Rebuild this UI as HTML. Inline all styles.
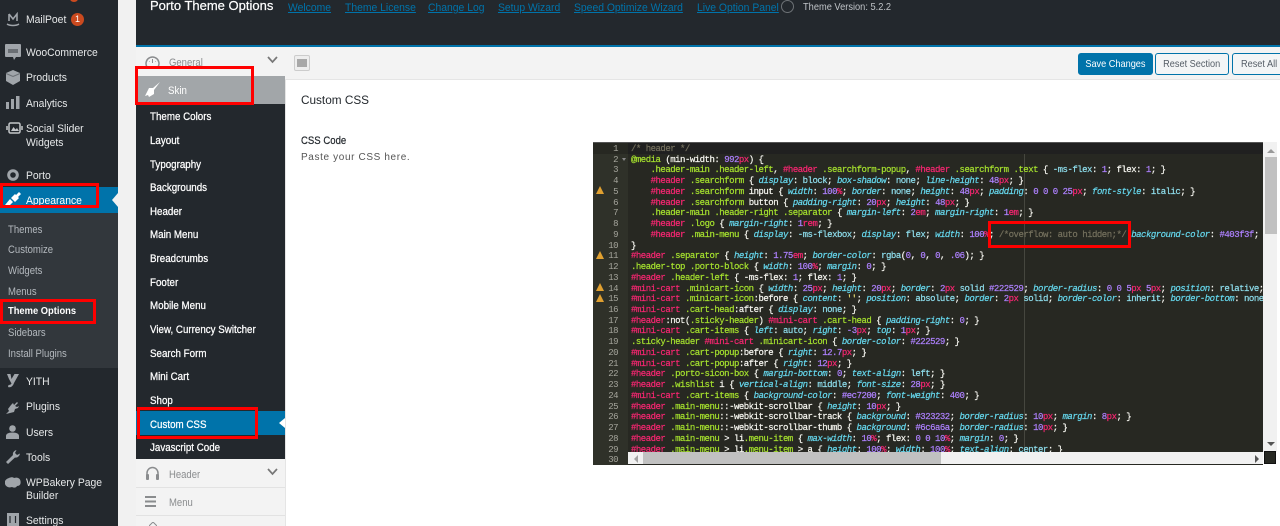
<!DOCTYPE html>
<html><head><meta charset="utf-8"><title>Porto Theme Options</title>
<style>
html,body{margin:0;padding:0;width:1280px;height:526px;overflow:hidden;background:#f1f1f1;font-family:"Liberation Sans",sans-serif}
body{filter:blur(.3px)}
.a,.s,.m,.h,.l,svg{position:absolute}
.a{display:block}
.s,.m,.h,.l,.x{transform-origin:0 50%}
.s{left:26px;margin-top:1px;font-size:11.4px;line-height:14px;color:#e6e8e9;white-space:nowrap;transform:scaleX(.91)}
.sub{left:8px;font-size:10.6px;color:#b4b9be;transform:scaleX(.9)}
.m{left:150px;margin-top:1px;font-size:10.8px;line-height:14px;color:#fff;white-space:nowrap;-webkit-text-stroke:.25px #fff;transform:scaleX(.905)}
.h{left:169px;margin-top:1px;font-size:10.8px;line-height:14px;color:#8a8c8e;white-space:nowrap;transform:scaleX(.88)}
.l{top:1px;font-size:11.4px;line-height:14px;color:#0073aa;text-decoration:underline;white-space:nowrap;transform:scaleX(.91)}
.r{position:absolute;border:3px solid #f00;box-sizing:border-box}
.btn{position:absolute;top:53px;height:22px;box-sizing:border-box;border:1px solid #0073aa;border-radius:3px;font-size:10.2px;line-height:21px;text-align:center;color:#555d66;background:#f3f5f6;white-space:nowrap;overflow:hidden}
.btn span{display:inline-block;transform:scaleX(.9)}
#code,#nums{font-family:"Liberation Mono",monospace;font-size:9px;line-height:10.74px;white-space:pre;letter-spacing:-.498px}
#code{position:absolute;left:631px;top:144px;width:632px;height:308px;overflow:hidden;color:#f8f8f2;-webkit-text-stroke:.2px}
#nums{position:absolute;left:593px;top:144px;width:25px;text-align:right;color:#a5a59c}
#code b{font-weight:normal;color:#f92672}#code u{text-decoration:none;color:#a6e22e}#code i{color:#66d9ef}#code s{text-decoration:none;color:#ae81ff}#code em{font-style:normal;color:#75715e}#code tt{font:inherit;color:#8fdfee}
</style></head><body>
<!-- admin sidebar -->
<div class="a" style="left:0;top:0;width:118px;height:526px;background:#23282d"></div>
<div class="a" style="left:0;top:187px;width:118px;height:26px;background:#0073aa"></div>
<div class="a" style="left:0;top:213px;width:118px;height:155px;background:#32373c"></div>
<div class="a" style="left:112px;top:193px;border:7px solid transparent;border-left:0;border-right:6px solid #f1f1f1"></div>
<div class="a" style="left:70px;top:-4px;width:8px;height:6px;border-radius:50%;background:#ca4a1f"></div>

<svg style="left:6px;top:12px" width="14" height="16" viewBox="0 0 14 16"><path d="M3 2v7M3 2l4 5 4-5v7" fill="none" stroke="#a0a5aa" stroke-width="1.6"/><path d="M1 12c3 2 9 2 12 0" fill="none" stroke="#a0a5aa" stroke-width="1.4"/></svg>
<div class="s" style="top:12px">MailPoet</div>
<div class="a" style="left:71px;top:13px;width:13px;height:13px;border-radius:50%;background:#ca4a1f;color:#fff;font-size:9px;line-height:13px;text-align:center">1</div>

<svg style="left:5px;top:44px" width="16" height="16" viewBox="0 0 16 16"><path d="M1 0h14a1 1 0 0 1 1 1v11a1 1 0 0 1-1 1h-4l-2 3-1-3H1a1 1 0 0 1-1-1V1a1 1 0 0 1 1-1z" fill="#a0a5aa"/><path d="M3 5h10v4H3z" fill="#6a6f74"/></svg>
<div class="s" style="top:45px">WooCommerce</div>
<svg style="left:5px;top:69px" width="16" height="16" viewBox="0 0 16 16"><path d="M8 1l7 3v8l-7 4-7-4V4z" fill="#a0a5aa"/><path d="M1 4.500l7 3 7-3" fill="none" stroke="#6a6f74"/></svg>
<div class="s" style="top:70px">Products</div>
<svg style="left:6px;top:96px" width="14" height="13" viewBox="0 0 14 13"><path d="M0 6h3v7H0zM5 3h3v10H5zM10 0h3.500v13H10z" fill="#a0a5aa"/></svg>
<div class="s" style="top:96px">Analytics</div>
<svg style="left:6px;top:122px" width="17" height="13" viewBox="0 0 17 13"><rect x="3" y="1" width="11" height="10" rx="1.500" fill="none" stroke="#c4c7ca" stroke-width="1.500"/><path d="M5 9l2.500-4 2 2.500 1.500-1.500 2 3z" fill="#c4c7ca"/><path d="M1 4v4M16 4v4" stroke="#c4c7ca" stroke-width="1.500"/></svg>
<div class="s" style="top:121px">Social Slider</div>
<div class="s" style="top:135px">Widgets</div>
<svg style="left:7px;top:169px" width="12" height="12" viewBox="0 0 12 12"><circle cx="6" cy="6" r="4.300" fill="none" stroke="#a0a5aa" stroke-width="3"/></svg>
<div class="s" style="top:168px">Porto</div>
<svg style="left:5px;top:192px" width="16" height="15" viewBox="0 0 16 15"><path d="M0 13l5-6 3 3-5 5zM6 6l4-4 1 1 3-3 2 2-3 3 1 1-4 4z" fill="#fff"/></svg>
<div class="s" style="top:193px;color:#fff">Appearance</div>
<div class="s sub" style="top:222px">Themes</div>
<div class="s sub" style="top:242px">Customize</div>
<div class="s sub" style="top:263px">Widgets</div>
<div class="s sub" style="top:284px">Menus</div>
<div class="s sub" style="top:304px;color:#fff;font-weight:bold;font-size:10.4px">Theme Options</div>
<div class="s sub" style="top:325px">Sidebars</div>
<div class="s sub" style="top:346px">Install Plugins</div>
<svg style="left:6px;top:373px" width="13" height="15" viewBox="0 0 13 15"><path d="M1 1h3.500l1 5 3-5H13L8 10c-1 3-3 5-6 4l.5-2c1.500 0 2.500-.5 3-1.500L3 6z" fill="#a0a5aa"/></svg>
<div class="s" style="top:374px">YITH</div>
<svg style="left:6px;top:400px" width="14" height="14" viewBox="0 0 14 14"><path d="M0 14l3-3-1-2 3-4 2-2 1 2 3-3 1 1-3 3 2 1 2-1-1 2-3 1-1 3-4 1z" fill="#a0a5aa"/></svg>
<div class="s" style="top:399px">Plugins</div>
<svg style="left:6px;top:425px" width="13" height="14" viewBox="0 0 13 14"><circle cx="6.500" cy="3.500" r="3.300" fill="#a0a5aa"/><path d="M0 14v-3c0-2 2-3.500 6.500-3.500S13 9 13 11v3z" fill="#a0a5aa"/></svg>
<div class="s" style="top:425px">Users</div>
<svg style="left:6px;top:450px" width="14" height="14" viewBox="0 0 14 14"><path d="M0 12l7-7c-.5-2 .5-4 3.500-5L9 3l2 2 3-1.500c-.5 3-3 4.500-5 4l-7 6.500z" fill="#a0a5aa"/></svg>
<div class="s" style="top:450px">Tools</div>
<svg style="left:5px;top:477px" width="16" height="12" viewBox="0 0 16 12"><path d="M4 1c2-1 4-1 5 0 3-1 6 0 6.500 3S15 9 12 9c-1 2-3 2-5 1-3 1-6 0-7-3S1 2 4 1z" fill="#a0a5aa"/></svg>
<div class="s" style="top:475px">WPBakery Page</div>
<div class="s" style="top:488px">Builder</div>
<svg style="left:7px;top:513px" width="12" height="13" viewBox="0 0 12 13"><rect width="12" height="13" fill="#a0a5aa"/><path d="M3 3v7M8.500 3v7" stroke="#23282d" stroke-width="1.200"/></svg>
<div class="s" style="top:513px">Settings</div>

<!-- top bar -->
<div class="a" style="left:136px;top:0;width:1144px;height:45px;background:#23282d"></div>
<div class="a" style="left:136px;top:45px;width:1144px;height:2px;background:#0073aa"></div>
<div class="a" style="left:150px;top:-2px;font-size:13px;line-height:16px;color:#fff;white-space:nowrap;-webkit-text-stroke:.2px #fff">Porto Theme Options</div>
<div class="l" style="left:288px">Welcome</div><div class="l" style="left:345px">Theme License</div><div class="l" style="left:428px">Change Log</div><div class="l" style="left:498px">Setup Wizard</div><div class="l" style="left:574px">Speed Optimize Wizard</div><div class="l" style="left:697px">Live Option Panel</div>
<div class="a" style="left:781px;top:0;width:11px;height:11px;border:1px solid #6d7276;border-radius:50%"></div>
<div class="a x" style="left:803px;top:1px;font-size:10.3px;line-height:14px;color:#c0c4c8;white-space:nowrap;transform:scaleX(.9)">Theme Version: 5.2.2</div>

<!-- main panel -->
<div class="a" style="left:136px;top:47px;width:1144px;height:479px;background:#fff"></div>
<div class="a" style="left:136px;top:47px;width:1144px;height:32px;background:#f3f3f3;border-bottom:1px solid #e5e5e5"></div>
<div class="a" style="left:136px;top:47px;width:149px;height:479px;background:#f3f3f3"></div>
<div class="a" style="left:285px;top:79px;width:1px;height:447px;background:#e5e5e5"></div>
<svg style="left:145px;top:55px" width="15" height="13" viewBox="0 0 15 13"><path d="M2 12a6.500 6.500 0 1 1 11 0" fill="none" stroke="#8a8c8e" stroke-width="1.500"/><path d="M7.500 8V4M4 6.500h.5M11 6.500h-.5" stroke="#8a8c8e"/></svg>
<div class="h" style="top:55px">General</div>
<svg style="left:267px;top:56px" width="11" height="8" viewBox="0 0 11 8"><path d="M1 1l4.500 5L10 1" fill="none" stroke="#777" stroke-width="1.700"/></svg>
<div class="a" style="left:294px;top:55px;width:16px;height:16px;box-sizing:border-box;border:1px solid #ccc;border-radius:2px;background:#eee"></div>
<div class="a" style="left:297px;top:59px;width:10px;height:8px;background:#a8a8a8"></div>
<!-- dark menu -->
<div class="a" style="left:136px;top:76px;width:149px;height:383px;background:#23282d"></div>
<div class="a" style="left:136px;top:76px;width:149px;height:28px;background:#a2a6a9"></div>
<svg style="left:145px;top:82px" width="15" height="15" viewBox="0 0 15 15"><path d="M15 0L8 6 4 6 0 14l3-1 1 2 5-3 0-4z" fill="#fff"/></svg>
<div class="a x" style="left:168px;top:84px;font-size:10.8px;line-height:14px;color:#fff;transform:scaleX(.9)">Skin</div>
<div class="a" style="left:136px;top:411px;width:149px;height:24px;background:#0073aa"></div>
<div class="a" style="left:279px;top:418px;border:5px solid transparent;border-left:0;border-right:6px solid #fff"></div>
<div class="m" style="top:109px">Theme Colors</div>
<div class="m" style="top:133px">Layout</div>
<div class="m" style="top:157px">Typography</div>
<div class="m" style="top:180px">Backgrounds</div>
<div class="m" style="top:204px">Header</div>
<div class="m" style="top:227px">Main Menu</div>
<div class="m" style="top:251px">Breadcrumbs</div>
<div class="m" style="top:275px">Footer</div>
<div class="m" style="top:298px">Mobile Menu</div>
<div class="m" style="top:322px">View, Currency Switcher</div>
<div class="m" style="top:346px">Search Form</div>
<div class="m" style="top:369px">Mini Cart</div>
<div class="m" style="top:393px">Shop</div>
<div class="m" style="top:417px">Custom CSS</div>
<div class="m" style="top:440px">Javascript Code</div>
<div class="a" style="left:136px;top:487px;width:149px;height:1px;background:#e2e2e2"></div>
<div class="a" style="left:136px;top:515px;width:149px;height:1px;background:#e2e2e2"></div>
<svg style="left:145px;top:466px" width="15" height="15" viewBox="0 0 15 15"><path d="M2 12V7a5.500 5.500 0 0 1 11 0v5" fill="none" stroke="#8a8c8e" stroke-width="1.500"/><rect x="1" y="8" width="3" height="6" rx="1" fill="#8a8c8e"/><rect x="11" y="8" width="3" height="6" rx="1" fill="#8a8c8e"/></svg>
<div class="h" style="top:467px">Header</div>
<svg style="left:267px;top:468px" width="11" height="8" viewBox="0 0 11 8"><path d="M1 1l4.500 5L10 1" fill="none" stroke="#777" stroke-width="1.700"/></svg>
<svg style="left:145px;top:496px" width="12" height="11" viewBox="0 0 12 11"><path d="M0 0h11v2H0zM0 4.500h11v2H0zM0 9h11v2H0z" fill="#8a8c8e"/></svg>
<div class="h" style="top:495px">Menu</div>
<svg style="left:149px;top:522px" width="8" height="4" viewBox="0 0 8 4"><path d="M0 4l4-4 4 4" fill="none" stroke="#8a8c8e"/></svg>

<!-- buttons -->
<div class="btn" style="left:1078px;width:75px;background:#0073aa;color:#fff"><span>Save Changes</span></div>
<div class="btn" style="left:1155px;width:74px"><span>Reset Section</span></div>
<div class="btn" style="left:1232px;width:60px;text-align:left;padding-left:8px"><span style="transform-origin:0 50%">Reset All</span></div>

<!-- content labels -->
<div class="a x" style="left:301px;top:92px;font-size:12.4px;line-height:16px;color:#23282d;transform:scaleX(.95)">Custom CSS</div>
<div class="a x" style="left:301px;top:134px;font-size:11.4px;line-height:14px;color:#23282d;white-space:nowrap;transform:scaleX(.84);-webkit-text-stroke:.2px #23282d">CSS Code</div>
<div class="a x" style="left:301px;top:151px;font-size:10px;line-height:14px;color:#555;white-space:nowrap;letter-spacing:.63px">Paste your CSS here.</div>

<!-- editor -->
<div class="a" style="left:593px;top:142px;width:684px;height:323px;background:#fff"></div>
<div class="a" style="left:593px;top:142px;width:670px;height:323px;background:#272822"></div>
<div class="a" style="left:593px;top:142px;width:35px;height:323px;background:#2f3129"></div>
<div class="a" style="left:593px;top:142px;width:670px;height:1px;background:#555"></div>
<div class="a" style="left:593px;top:143px;width:35px;height:11px;background:#272822"></div>
<div class="a" style="left:628px;top:143px;width:635px;height:11px;background:#202020"></div>
<div class="a" style="left:1024px;top:154px;width:1px;height:298px;background:#46473f"></div>
<div id="nums">1
2
3
4
5
6
7
8
9
10
11
12
13
14
15
16
17
18
19
20
21
22
23
24
25
26
27
28
29
30</div>
<div class="a" style="left:622px;top:158px;border:2px solid transparent;border-top:3px solid #888;border-bottom:0"></div>
<svg style="left:596px;top:186px" width="8" height="8" viewBox="0 0 8 8"><path d="M4 0l4 8H0z" fill="#e0a030"/></svg>
<svg style="left:596px;top:251px" width="8" height="8" viewBox="0 0 8 8"><path d="M4 0l4 8H0z" fill="#e0a030"/></svg>
<svg style="left:596px;top:283px" width="8" height="8" viewBox="0 0 8 8"><path d="M4 0l4 8H0z" fill="#e0a030"/></svg>
<svg style="left:596px;top:294px" width="8" height="8" viewBox="0 0 8 8"><path d="M4 0l4 8H0z" fill="#e0a030"/></svg>
<div id="code"><em>/* header */</em>
<u>@media</u> (<i style="font-style:normal;color:#f8f8f2">min-width</i>: <s>992</s><b>px</b>) {
    <u>.header-main .header-left</u>, <b>#header</b> <u>.searchform-popup</u>, <b>#header</b> <u>.searchform .text</u> { <tt>-ms-flex</tt>: <s>1</s>; flex: <s>1</s>; }
    <b>#header</b> <u>.searchform</u> { <i>display</i>: <tt>block</tt>; <i>box-shadow</i>: <tt>none</tt>; <i>line-height</i>: <s>48</s><b>px</b>; }
    <b>#header</b> <u>.searchform</u> input { <i>width</i>: <s>100</s><b>%</b>; <i>border</i>: <tt>none</tt>; <i>height</i>: <s>48</s><b>px</b>; <i>padding</i>: <s>0 0 0 25</s><b>px</b>; <i>font-style</i>: <tt>italic</tt>; }
    <b>#header</b> <u>.searchform</u> button { <i>padding-right</i>: <s>20</s><b>px</b>; <i>height</i>: <s>48</s><b>px</b>; }
    <u>.header-main .header-right .separator</u> { <i>margin-left</i>: <s>2</s><b>em</b>; <i>margin-right</i>: <s>1</s><b>em</b>; }
    <b>#header</b> <u>.logo</u> { <i>margin-right</i>: <s>1</s><b>rem</b>; }
    <b>#header</b> <u>.main-menu</u> { <i>display</i>: <tt>-ms-flexbox</tt>; <i>display</i>: <tt>flex</tt>; <i>width</i>: <s>100</s><b>%</b>; <em>/*overflow: auto hidden;*/</em> <i>background-color</i>: <s>#403f3f</s>;
}
<b>#header</b> <u>.separator</u> { <i>height</i>: <s>1.75</s><b>em</b>; <i>border-color</i>: <tt>rgba</tt>(<s>0</s>, <s>0</s>, <s>0</s>, <s>.06</s>); }
<u>.header-top .porto-block</u> { <i>width</i>: <s>100</s><b>%</b>; <i>margin</i>: <s>0</s>; }
<b>#header</b> <u>.header-left</u> { -ms-flex: <s>1</s>; flex: <s>1</s>; }
<b>#mini-cart</b> <u>.minicart-icon</u> { <i>width</i>: <s>25</s><b>px</b>; <i>height</i>: <s>20</s><b>px</b>; <i>border</i>: <s>2</s><b>px</b> <tt>solid</tt> <s>#222529</s>; <i>border-radius</i>: <s>0 0 5</s><b>px</b> <s>5</s><b>px</b>; <i>position</i>: <tt>relative</tt>;
<b>#mini-cart</b> <u>.minicart-icon</u>:before { <i>content</i>: <span style="color:#e6db74">''</span>; <i>position</i>: <tt>absolute</tt>; <i>border</i>: <s>2</s><b>px</b> <tt>solid</tt>; <i>border-color</i>: <tt>inherit</tt>; <i>border-bottom</i>: <tt>none</tt>
<b>#mini-cart</b> <u>.cart-head</u>:after { <i>display</i>: <tt>none</tt>; }
<b>#header</b>:not(<u>.sticky-header</u>) <b>#mini-cart</b> <u>.cart-head</u> { <i>padding-right</i>: <s>0</s>; }
<b>#mini-cart</b> <u>.cart-items</u> { <i>left</i>: <tt>auto</tt>; <i>right</i>: <s>-3</s><b>px</b>; <i>top</i>: <s>1</s><b>px</b>; }
<u>.sticky-header</u> <b>#mini-cart</b> <u>.minicart-icon</u> { <i>border-color</i>: <s>#222529</s>; }
<b>#mini-cart</b> <u>.cart-popup</u>:before { <i>right</i>: <s>12.7</s><b>px</b>; }
<b>#mini-cart</b> <u>.cart-popup</u>:after { <i>right</i>: <s>12</s><b>px</b>; }
<b>#header</b> <u>.porto-sicon-box</u> { <i>margin-bottom</i>: <s>0</s>; <i>text-align</i>: <tt>left</tt>; }
<b>#header</b> <u>.wishlist</u> i { <i>vertical-align</i>: <tt>middle</tt>; <i>font-size</i>: <s>28</s><b>px</b>; }
<b>#mini-cart</b> <u>.cart-items</u> { <i>background-color</i>: <s>#ec7200</s>; <i>font-weight</i>: <s>400</s>; }
<b>#header</b> <u>.main-menu</u>::-webkit-scrollbar { <i>height</i>: <s>10</s><b>px</b>; }
<b>#header</b> <u>.main-menu</u>::-webkit-scrollbar-track { <i>background</i>: <s>#323232</s>; <i>border-radius</i>: <s>10</s><b>px</b>; <i>margin</i>: <s>8</s><b>px</b>; }
<b>#header</b> <u>.main-menu</u>::-webkit-scrollbar-thumb { <i>background</i>: <s>#6c6a6a</s>; <i>border-radius</i>: <s>10</s><b>px</b>; }
<b>#header</b> <u>.main-menu</u> &gt; li<u>.menu-item</u> { <i>max-width</i>: <s>10</s><b>%</b>; flex: <s>0 0 10</s><b>%</b>; <i>margin</i>: <s>0</s>; }
<b>#header</b> <u>.main-menu</u> &gt; li<u>.menu-item</u> &gt; a { <i>height</i>: <s>100</s><b>%</b>; <i>width</i>: <s>100</s><b>%</b>; <i>text-align</i>: <tt>center</tt>; }</div>
<!-- scrollbars -->
<div class="a" style="left:1263px;top:142px;width:14px;height:310px;background:#f1f1f1"></div>
<div class="a" style="left:1265px;top:157px;width:12px;height:77px;background:#c1c1c1"></div>
<div class="a" style="left:1267px;top:149px;border:4px solid transparent;border-top:0;border-bottom:4px solid #999"></div>
<div class="a" style="left:1267px;top:442px;border:4px solid transparent;border-bottom:0;border-top:4px solid #555"></div>
<div class="a" style="left:628px;top:452px;width:635px;height:12px;background:#f1f1f1"></div>
<div class="a" style="left:643px;top:452px;width:298px;height:12px;background:#c1c1c1"></div>
<div class="a" style="left:634px;top:455px;border:4px solid transparent;border-left:0;border-right:4px solid #a3a3a3"></div>
<div class="a" style="left:1255px;top:455px;border:4px solid transparent;border-right:0;border-left:4px solid #555"></div>
<div class="a" style="left:1264px;top:451px;width:12px;height:13px;background:#272822;border:1px solid #111;box-sizing:border-box"></div>

<!-- red annotation boxes -->
<div class="r" style="left:135px;top:66px;width:119px;height:39px"></div>
<div class="r" style="left:0;top:183px;width:99px;height:25px"></div>
<div class="r" style="left:0;top:299px;width:96px;height:25px"></div>
<div class="r" style="left:137px;top:407px;width:121px;height:32px"></div>
<div class="r" style="left:988px;top:221px;width:143px;height:27px"></div>
</body></html>
